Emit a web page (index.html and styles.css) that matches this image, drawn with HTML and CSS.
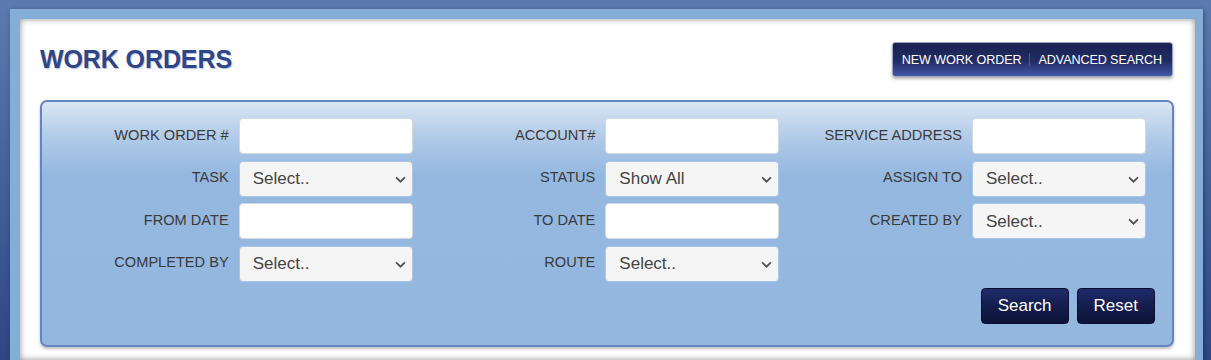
FILE: index.html
```html
<!DOCTYPE html>
<html lang="en">
<head>
    <meta charset="UTF-8">
    <title>Work Orders</title>
    <link rel="stylesheet" href="styles.css">
</head>
<body>
    <div class="frame">
        <div class="page">
            <div class="header">
                <h1 class="title">WORK ORDERS</h1>
                <div class="nav-group">
                    <a href="#" class="nav-link">NEW WORK ORDER</a>
                    <span class="nav-sep"></span>
                    <a href="#" class="nav-link">ADVANCED SEARCH</a>
                </div>
            </div>

            <div class="search-panel">
                <div class="field-row">
                    <div class="field">
                        <label class="field-label">WORK ORDER #</label>
                        <input class="field-input" type="text">
                    </div>
                    <div class="field">
                        <label class="field-label">ACCOUNT#</label>
                        <input class="field-input" type="text">
                    </div>
                    <div class="field">
                        <label class="field-label">SERVICE ADDRESS</label>
                        <input class="field-input" type="text">
                    </div>
                </div>
                <div class="field-row">
                    <div class="field">
                        <label class="field-label">TASK</label>
                        <div class="select-wrap">
                            <select class="field-select"><option>Select..</option></select>
                            <svg class="chevron" viewBox="0 0 10 6"><path d="M1 1l4 4 4-4"/></svg>
                        </div>
                    </div>
                    <div class="field">
                        <label class="field-label">STATUS</label>
                        <div class="select-wrap">
                            <select class="field-select"><option>Show All</option></select>
                            <svg class="chevron" viewBox="0 0 10 6"><path d="M1 1l4 4 4-4"/></svg>
                        </div>
                    </div>
                    <div class="field">
                        <label class="field-label">ASSIGN TO</label>
                        <div class="select-wrap">
                            <select class="field-select"><option>Select..</option></select>
                            <svg class="chevron" viewBox="0 0 10 6"><path d="M1 1l4 4 4-4"/></svg>
                        </div>
                    </div>
                </div>
                <div class="field-row">
                    <div class="field">
                        <label class="field-label">FROM DATE</label>
                        <input class="field-input" type="text">
                    </div>
                    <div class="field">
                        <label class="field-label">TO DATE</label>
                        <input class="field-input" type="text">
                    </div>
                    <div class="field">
                        <label class="field-label">CREATED BY</label>
                        <div class="select-wrap">
                            <select class="field-select"><option>Select..</option></select>
                            <svg class="chevron" viewBox="0 0 10 6"><path d="M1 1l4 4 4-4"/></svg>
                        </div>
                    </div>
                </div>
                <div class="field-row">
                    <div class="field">
                        <label class="field-label">COMPLETED BY</label>
                        <div class="select-wrap">
                            <select class="field-select"><option>Select..</option></select>
                            <svg class="chevron" viewBox="0 0 10 6"><path d="M1 1l4 4 4-4"/></svg>
                        </div>
                    </div>
                    <div class="field">
                        <label class="field-label">ROUTE</label>
                        <div class="select-wrap">
                            <select class="field-select"><option>Select..</option></select>
                            <svg class="chevron" viewBox="0 0 10 6"><path d="M1 1l4 4 4-4"/></svg>
                        </div>
                    </div>
                    <div class="field"></div>
                </div>
                <div class="button-row">
                    <button class="btn">Search</button>
                    <button class="btn">Reset</button>
                </div>
            </div>
        </div>
    </div>
</body>
</html>
```

FILE: styles.css
```css
html, body {
    height: 100%;
}

body {
    margin: 0;
    padding: 9px 8px 0 10px;
    box-sizing: border-box;
    background: linear-gradient(to bottom, #5c7ab0 0%, #2e4683 100%);
    font-family: "Liberation Sans", Arial, sans-serif;
    overflow: hidden;
}

.frame {
    background: #84aed7;
    padding: 10px 8px 0 10px;
    height: 100%;
    box-sizing: border-box;
    box-shadow: 1px 1px 4px rgba(0, 0, 0, 0.35);
}

.page {
    background: #fff;
    height: 100%;
    box-sizing: border-box;
    padding: 23px 21px 0 20px;
    box-shadow: inset 0 0 6px rgba(0, 0, 0, 0.45);
}

.header {
    display: flex;
    justify-content: space-between;
    align-items: center;
    height: 35px;
    margin-bottom: 23px;
}

.title {
    margin: 0;
    font-size: 25px;
    font-weight: bold;
    color: #2f4589;
    text-shadow: 1px 1px 1px #b8c2d6;
    letter-spacing: -0.1px;
}

.nav-group {
    display: flex;
    align-items: center;
    height: 35px;
    box-sizing: border-box;
    padding: 0 10px 0 9px;
    margin-right: 1px;
    background: linear-gradient(to bottom, #1b2150 0%, #222c64 55%, #4259a6 100%);
    border: 1px solid #9ca6c4;
    border-radius: 3px;
    box-shadow: 0 2px 3px rgba(0, 0, 0, 0.3);
}

.nav-link {
    color: #fff;
    font-size: 12.6px;
    text-decoration: none;
    letter-spacing: -0.1px;
}

.nav-sep {
    width: 1px;
    height: 13px;
    margin: 0 8px 0 8px;
    background: #4a5a94;
}

.search-panel {
    border: 2px solid #6385c2;
    border-radius: 7px;
    padding: 16px 0 21px 30px;
    background: linear-gradient(to bottom, #dbe6f3 0%, #b2cbe8 14%, #94b8e0 30%, #93b7df 100%);
    box-shadow: 0 2px 3px rgba(0, 0, 0, 0.25);
}

.field-row {
    display: flex;
    margin-bottom: 6.5px;
}

.field {
    flex: 1;
    display: flex;
    align-items: center;
    padding-right: 26px;
}

.field-label {
    flex: 1;
    text-align: right;
    margin-right: 10px;
    padding-bottom: 3px;
    font-size: 14.6px;
    color: #3a3a3a;
}

.field-input,
.field-select {
    width: 174px;
    height: 36px;
    box-sizing: border-box;
    border-radius: 4px;
    font-family: "Liberation Sans", Arial, sans-serif;
    font-size: 17px;
    color: #444;
    margin: 0;
}

.field-input {
    border: 1px solid #d4d9e0;
    background: #fff;
}

.select-wrap {
    position: relative;
}

.field-select {
    display: block;
    -webkit-appearance: none;
    appearance: none;
    border: 1px solid #a9c6ea;
    background: #f5f5f5;
    padding: 0 12px 0 13px;
    outline: none;
}

.chevron {
    position: absolute;
    right: 7px;
    top: 15px;
    width: 11px;
    height: 7px;
    fill: none;
    stroke: #505050;
    stroke-width: 1.6;
    pointer-events: none;
}

.button-row {
    display: flex;
    justify-content: flex-end;
    gap: 8px;
    padding-right: 17px;
}

.btn {
    height: 36px;
    padding: 0 16px;
    border: 1px solid #0b1030;
    border-radius: 4px;
    background: linear-gradient(to bottom, #202c6c 0%, #121a48 60%, #0d1438 100%);
    color: #fff;
    font-family: "Liberation Sans", Arial, sans-serif;
    font-size: 17px;
    cursor: pointer;
}
```
